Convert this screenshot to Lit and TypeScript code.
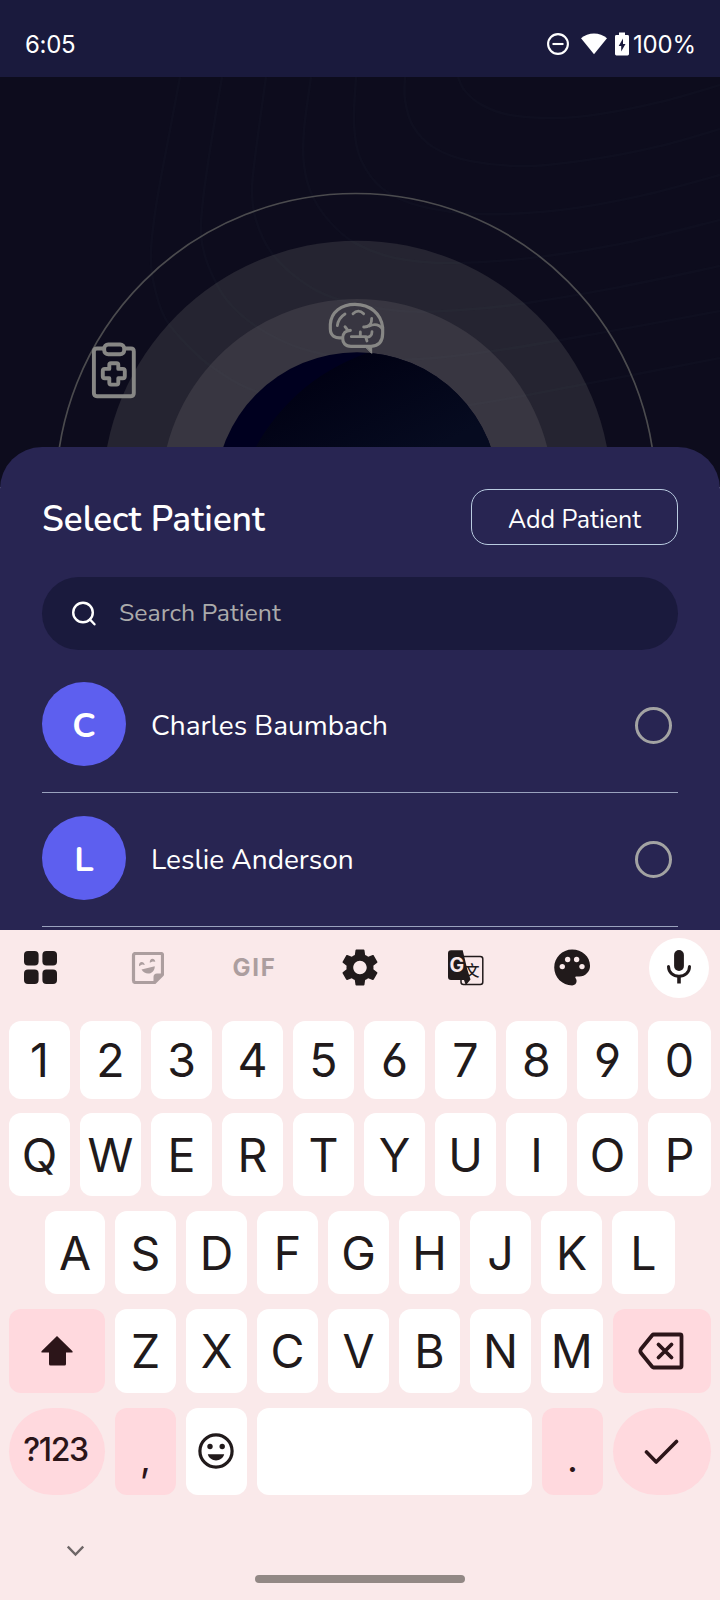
import { LitElement, html, svg, css } from "lit";
import { customElement, property } from "lit/decorators.js";

type Point = [number, number];

// Smooth open curve through a list of points.
function smooth(points: Point[]): string {
  let d = `M${points[0][0]} ${points[0][1]}`;
  for (let i = 0; i < points.length - 1; i++) {
    const a = points[Math.max(0, i - 1)];
    const b = points[i];
    const c = points[i + 1];
    const e = points[Math.min(points.length - 1, i + 2)];
    d += `C${b[0] + (c[0] - a[0]) / 6} ${b[1] + (c[1] - a[1]) / 6} ${c[0] - (e[0] - b[0]) / 6} ${c[1] - (e[1] - b[1]) / 6} ${c[0]} ${c[1]}`;
  }
  return d;
}

const contours: Point[][] = [
  [[180, 77], [170, 130], [157, 200], [151, 250], [153, 280], [165, 318], [190, 348], [215, 369], [255, 391], [330, 408], [400, 410], [470, 405], [580, 385], [720, 358]],
  [[222, 77], [210, 150], [203, 200], [201, 235], [208, 265], [226, 299], [257, 327], [300, 348], [350, 358], [420, 359], [500, 350], [600, 333], [720, 311]],
  [[266, 77], [256, 150], [252, 190], [256, 220], [271, 252], [300, 280], [337, 299], [400, 311], [460, 310], [520, 304], [620, 287], [720, 266]],
  [[311, 77], [304, 130], [304, 165], [312, 195], [330, 222], [355, 243], [395, 258], [450, 263], [530, 258], [620, 244], [720, 220]],
  [[356, 77], [354, 125], [361, 160], [383, 189], [420, 206], [480, 214], [560, 210], [640, 196], [720, 175]],
  [[405, 77], [405, 100], [413, 126], [433, 147], [470, 161], [530, 166], [600, 158], [660, 146], [720, 129]],
  [[458, 77], [465, 91], [482, 105], [510, 115], [555, 118], [600, 114], [660, 102], [720, 85]],
];

@customElement("status-bar")
class StatusBar extends LitElement {
  static styles = css`
    :host { display: flex; height: 77px; box-sizing: border-box; padding: 11px 22px 0 25px;
      background: #1a1a3d; color: #fff; align-items: center; font: 400 24px/30px Inter, sans-serif; }
    svg { display: block; }
    .time { flex: 1; letter-spacing: -0.3px; padding-top: 2px; }
    .dnd { margin-right: 12px; }
    .wifi { margin-right: 8px; }
    .battery { margin-right: 4px; }
    .level { width: 65px; letter-spacing: -0.2px; white-space: nowrap; padding-top: 2px; }
  `;
  render() {
    return html`
      <span class="time">6:05</span>
      <svg class="dnd" width="22" height="22" viewBox="0 0 22 22" fill="none" stroke="#fff" stroke-width="2.1">
        <circle cx="11" cy="11" r="9.9" /><path d="M5.5 11h11" />
      </svg>
      <svg class="wifi" width="26" height="22" viewBox="0 0 26 22" fill="#fff"><path d="M0 5.2C7-1.2 19-1.2 26 5.2L13 21.3Z" /></svg>
      <svg class="battery" width="14" height="24" viewBox="0 0 14 24">
        <path d="M4 .5h6v2.6h2.6q1.4 0 1.4 1.4v17.6q0 1.4-1.4 1.4H1.4Q0 23.5 0 22.1V4.5q0-1.4 1.4-1.4H4Z" fill="#fff" />
        <path d="M8 6.5 3.7 14H6.2v5.5L10.5 12H8Z" fill="#1a1a3d" />
      </svg>
      <span class="level">100%</span>
    `;
  }
}

@customElement("hero-scene")
class HeroScene extends LitElement {
  static styles = css`
    :host { display: block; height: 410px; margin-bottom: -40px; background: #0d0c1d; }
    svg { display: block; }
  `;
  render() {
    return html`
      <svg width="720" height="410" viewBox="0 77 720 410" fill="none">
        <defs>
          <linearGradient id="core" gradientUnits="userSpaceOnUse" x1="330" y1="350" x2="390" y2="470">
            <stop offset="0" stop-color="#000012" /><stop offset="1" stop-color="#060b20" />
          </linearGradient>
          <clipPath id="disc"><circle cx="357" cy="494.3" r="142" /></clipPath>
        </defs>
        <circle cx="355.8" cy="493.4" r="299.9" stroke="#4b4b4e" stroke-width="1.7" />
        <circle cx="357" cy="495.3" r="254.6" fill="#252431" />
        <circle cx="357" cy="495.3" r="196.3" fill="#383641" />
        ${contours.map((c) => svg`<path d=${smooth(c)} stroke="#6a8090" stroke-opacity=".027" stroke-width="2.6" />`)}
        <circle cx="357" cy="494.3" r="142" fill="#00001f" />
        <circle cx="433" cy="544" r="202" fill="url(#core)" clip-path="url(#disc)" />
        <g stroke="#878785" stroke-width="3.9" stroke-linecap="round" stroke-linejoin="round">
          <path d="M103 348.5H97Q93.9 348.5 93.9 351.5V393Q93.9 396.2 97 396.2H131Q133.8 396.2 133.8 393V351.5Q133.8 348.5 131 348.5H125" />
          <rect x="104.2" y="344.5" width="20" height="9.8" rx="4" />
          <path d="M111 363.2h5.6q1.7 0 1.7 1.7v4h4.5q2 0 2 2v5.4q0 2-2 2h-4.5v4.3q0 2-1.7 2H111q-1.7 0-1.7-2v-4.3h-4.5q-2 0-2-2v-5.4q0-2 2-2h4.5v-4q0-1.7 1.7-1.7Z" />
        </g>
        <g transform="translate(320 290) scale(.33333)" stroke="#878785" stroke-width="9.5" stroke-linecap="round" stroke-linejoin="round">
          <path d="M66 143C47 146 31 138 31 117V103C33 66 64 43 105 43C151 43 183 71 188 112V130C188 154 176 168 153 169H93C75 169 68 158 68 145C68 130 78 121 91 121" />
          <path d="M52 107C54 92 62 80 75 72M99 71C109 61 121 61 131 71M131 111C147 112 156 101 155 85M148 108C165 100 179 105 188 118M75 110L84 122M94 140H138M121 138V126M156 125C156 138 148 143 137 141L141 153" stroke-width="8.5" />
          <path d="M137 171H155V189Z" fill="#878785" stroke-width="3" />
        </g>
      </svg>
    `;
  }
}

@customElement("patient-row")
class PatientRow extends LitElement {
  @property() name = "";
  static styles = css`
    :host { display: flex; height: 134px; box-sizing: border-box; padding: 0 6px 26px 0; align-items: flex-end;
      border-bottom: 1px solid #9aa2be; color: #fff; font-family: "Nunito", "Open Sans", sans-serif; }
    .avatar { width: 84px; height: 84px; border-radius: 50%; background: #5d5fef; display: grid; place-items: center;
      font-weight: 700; font-size: 34.5px; line-height: 84px; }
    .letter { padding-top: 3px; line-height: 81px; }
    .name { flex: 1; margin-left: 25px; font-size: 28px; line-height: 80px; white-space: nowrap; }
    .radio { width: 37px; height: 37px; box-sizing: border-box; border: 3px solid #a3a3a3; border-radius: 50%; margin-bottom: 22.5px; }
  `;
  render() {
    return html`
      <div class="avatar"><span class="letter">${this.name[0]}</span></div>
      <div class="name">${this.name}</div>
      <div class="radio"></div>
    `;
  }
}

@customElement("patient-sheet")
class PatientSheet extends LitElement {
  static styles = css`
    :host { display: block; position: relative; height: 483px; box-sizing: border-box; overflow: hidden; padding: 42px 42px 0;
      border-radius: 42px 42px 0 0; background: #282552; color: #fff; font-family: "Nunito", "Open Sans", sans-serif; }
    .head { display: flex; justify-content: space-between; align-items: center; height: 56px; }
    .title { font-size: 35px; font-weight: 600; line-height: 60px; padding-top: 6px; white-space: nowrap; letter-spacing: 0.05px; }
    .add { width: 207px; height: 56px; box-sizing: border-box; border: 1.5px solid #b9cbe0; border-radius: 17px;
      font-size: 25px; line-height: 60px; text-align: center; white-space: nowrap; }
    .search { display: flex; align-items: center; height: 73px; margin-top: 32px; padding-left: 29px; border-radius: 37px; background: #1a1a3d; box-sizing: border-box; }
    .search svg { display: block; margin-right: 21px; }
    .hint { font-size: 24.9px; line-height: 70px; padding-bottom: 2px; color: #ababab; white-space: nowrap; }
    .list { margin-top: 9px; }
  `;
  render() {
    return html`
      <div class="head">
        <div class="title">Select Patient</div>
        <div class="add">Add Patient</div>
      </div>
      <div class="search">
        <svg width="27" height="27" viewBox="0 0 27 27" fill="none" stroke="#fff" stroke-width="2.4" stroke-linecap="round">
          <circle cx="12" cy="12.5" r="9.8" /><path d="m19 19.5 4.5 4.8" />
        </svg>
        <span class="hint">Search Patient</span>
      </div>
      <div class="list">
        <patient-row name="Charles Baumbach"></patient-row>
        <patient-row name="Leslie Anderson"></patient-row>
      </div>
    `;
  }
}

const gear = "M19.14 12.94c.04-.3.06-.61.06-.94 0-.32-.02-.64-.07-.94l2.03-1.58c.18-.14.23-.41.12-.61l-1.92-3.32c-.12-.22-.37-.29-.59-.22l-2.39.96c-.5-.38-1.03-.7-1.62-.94l-.36-2.54c-.04-.24-.24-.41-.48-.41h-3.84c-.24 0-.43.17-.47.41l-.36 2.54c-.59.24-1.13.57-1.62.94l-2.39-.96c-.22-.08-.47 0-.59.22L2.74 8.87c-.12.21-.08.47.12.61l2.03 1.58c-.05.3-.09.63-.09.94s.02.64.07.94l-2.03 1.58c-.18.14-.23.41-.12.61l1.92 3.32c.12.22.37.29.59.22l2.39-.96c.5.38 1.03.7 1.62.94l.36 2.54c.05.24.24.41.48.41h3.84c.24 0 .44-.17.47-.41l.36-2.54c.59-.24 1.13-.56 1.62-.94l2.39.96c.22.08.47 0 .59-.22l1.92-3.32c.12-.22.07-.47-.12-.61l-2.01-1.58zM12 15.6c-1.98 0-3.6-1.62-3.6-3.6s1.62-3.6 3.6-3.6 3.6 1.62 3.6 3.6-1.62 3.6-3.6 3.6z";

@customElement("soft-keyboard")
class SoftKeyboard extends LitElement {
  static styles = css`
    :host { display: block; height: 670px; background: #fae9ea; color: #211a1b; overflow: hidden; font-family: Inter, sans-serif; }
    svg { display: block; }
    .tools { display: grid; grid-template-columns: repeat(7, 106.4px); height: 76px; margin: 0 0 15px -12.4px; place-items: center; }
    .tools > svg { margin-bottom: 1px; }
    .gif { font-weight: 700; font-size: 24px; line-height: 30px; letter-spacing: 1.8px; color: #ac9e9f; padding: 0 0 1px 2px; }
    .mic { width: 60px; height: 60px; border-radius: 50%; background: #fff; display: grid; place-items: center; }
    .mic svg { margin-bottom: 2px; }
    .row { display: flex; gap: 10px; height: 83px; margin: 0 9px 15px; }
    .row.digits { height: 78px; margin-bottom: 14px; }
    .row.home { margin: 0 45px 15px; }
    .row.lower { height: 84px; }
    .row.last { height: 87px; margin-bottom: 0; }
    .key { flex: 0 0 61px; min-width: 0; display: flex; align-items: center; justify-content: center; border-radius: 12px; background: #fff;
      font-size: 46.5px; line-height: 60px; font-weight: 400; font-feature-settings: "cv03", "cv04"; }
    .row > .key:last-child { flex-grow: 1; }
    .home > .key:first-child { flex-basis: 60px; }
    .row > .pink { background: #ffd9de; color: #2c1519; }
    .lower > .shift, .last > .symbols { flex: 0 0 96px; }
    .row > .del, .row > .enter { flex: 0 0 98px; }
    .lower > .key:nth-child(8) { flex-grow: 1; }
    .symbols, .enter { border-radius: 44px; }
    .symbols { font-size: 32px; font-weight: 500; letter-spacing: -1.4px; padding: 0 3px 3px 0; box-sizing: border-box; }
    .last > .space { flex: 0 0 275px; }
    .mark { font-size: 38px; align-items: flex-end; padding-bottom: 7px; box-sizing: border-box; }
    .del svg { margin-right: 2px; }
    .smile svg { margin: 0 1px 1px 0; }
    .foot { display: flex; padding: 50px 0 0 67px; }
    .pill { width: 210px; height: 8px; border-radius: 4px; background: #928885; margin: 18px 0 0 255px; }
  `;
  keys(text: string) {
    return [...text].map((k) => html`<div class="key">${k}</div>`);
  }
  render() {
    return html`
      <div class="tools">
        <svg width="33" height="33" viewBox="0 0 33 33" fill="currentColor">
          <rect width="14.6" height="14.6" rx="4" /><rect x="18.4" width="14.6" height="14.6" rx="4" />
          <rect y="18.4" width="14.6" height="14.6" rx="4" /><rect x="18.4" y="18.4" width="14.6" height="14.6" rx="4" />
        </svg>
        <svg width="34" height="32" viewBox="-2 0 34 32" fill="none" stroke="#ac9e9f">
          <path d="M3.5 1.5h25.5q1.5 0 1.5 1.5v19.5l-8 8H3.500q-2 0-2-2v-25q0-2 2-2Z" stroke-width="3.2" stroke-linejoin="round" />
          <path d="M21.5 31v-6q0-3.5 3.5-3.5h6Z" fill="#ac9e9f" stroke="none" />
          <path d="M9.5 17.500 22.800 14.200C22.500 22.800 13 23.800 9.500 17.500Z" fill="#ac9e9f" stroke="none" />
          <path d="M7 14.200c-.7-5 5-5.700 5.800-1.200l-2.700-.5ZM17.800 10.800c-.5-5 5-5.300 5.500-1l-2.700-.4Z" fill="#ac9e9f" stroke="none" />
        </svg>
        <span class="gif">GIF</span>
        <svg width="45" height="45" viewBox="-.25 0 24 24" fill="currentColor"><path d=${gear} /></svg>
        <svg width="36" height="36" viewBox="0 0 36 36">
          <rect x="13" y="6.500" width="21.800" height="28" rx="2.500" fill="none" stroke="currentColor" stroke-width="1.500" />
          <text x="16.600" y="25.500" font-family="Noto Sans CJK SC, sans-serif" font-weight="500" font-size="15" fill="currentColor">文</text>
          <path d="M3 .3H14.700L19.200 19 22.500 29.500 17.800 35.300 16 30H3Q0 30 0 27V3.300Q0 .3 3 .3Z" fill="currentColor" />
          <text x="1.500" y="22" font-family="Inter, sans-serif" font-weight="700" font-size="19.500" fill="#fae9ea">G</text>
        </svg>
        <svg width="43" height="43" viewBox="0.200 0 24 24" fill="currentColor">
          <path d="M12 22C6.490 22 2 17.510 2 12S6.490 2 12 2s10 4.040 10 9c0 3.310-2.690 6-6 6h-1.770c-.280 0-.500.220-.500.500 0 .120.050.230.130.330.410.470.640 1.060.640 1.670 0 1.380-1.120 2.500-2.500 2.500z" />
          <g fill="#fae9ea"><circle cx="6.500" cy="11.500" r="1.500" /><circle cx="9.500" cy="7.500" r="1.500" /><circle cx="14.500" cy="7.500" r="1.500" /><circle cx="17.500" cy="11.500" r="1.500" /></g>
        </svg>
        <div class="mic">
          <svg width="26" height="34" viewBox="0 0 26 34" fill="none" stroke="currentColor" stroke-width="3">
            <rect x="8.1" y="0" width="9.8" height="21" rx="4.9" fill="currentColor" stroke="none" />
            <path d="M2.500 16.500c0 6 4.700 9.800 10.500 9.800s10.500-3.800 10.500-9.800" stroke-linecap="round" /><path d="M13 26v7.500" stroke-width="3.600" />
          </svg>
        </div>
      </div>
      <div class="row digits">${this.keys("1234567890")}</div>
      <div class="row">${this.keys("QWERTYUIOP")}</div>
      <div class="row home">${this.keys("ASDFGHJKL")}</div>
      <div class="row lower">
        <div class="key pink shift">
          <svg width="32" height="30" viewBox="0 0 32 30" fill="currentColor"><path d="M16 0 31.300 15q1 1.500-.800 1.500H25V28q0 1.500-1.500 1.500h-14Q8 29.500 8 28V16.500H1.500Q-.300 16.500.700 15Z" /></svg>
        </div>
        ${this.keys("ZXCVBNM")}
        <div class="key pink del">
          <svg width="46" height="38" viewBox="0 0 46 38" fill="none" stroke="currentColor" stroke-width="3.800" stroke-linejoin="round" stroke-linecap="round">
            <path d="M15.500 2.500H42Q43.500 2.500 43.500 4V34Q43.500 35.500 42 35.500H15.500Q14.800 35.500 14.200 34.800L3 21Q1.700 19 3 17L14.200 3.200Q14.800 2.500 15.500 2.500Z" />
            <path d="m20.500 12.500 13 13m0-13-13 13" />
          </svg>
        </div>
      </div>
      <div class="row last">
        <div class="key pink symbols">?123</div>
        <div class="key pink mark">,</div>
        <div class="key smile">
          <svg width="36" height="36" viewBox="0 0 36 36" fill="currentColor">
            <circle cx="18" cy="18" r="16.100" fill="none" stroke="currentColor" stroke-width="3.200" />
            <circle cx="12" cy="13.500" r="2.700" /><circle cx="24.200" cy="13.500" r="2.700" /><path d="M9.800 21.300H26.200C24 29.500 12 29.500 9.800 21.300Z" />
          </svg>
        </div>
        <div class="key space"></div>
        <div class="key pink mark">.</div>
        <div class="key pink enter">
          <svg width="36" height="26" viewBox="0 0 36 26" fill="none" stroke="currentColor" stroke-width="3.600" stroke-linecap="round" stroke-linejoin="round"><path d="M2.500 13 12.200 23 32.500 2.500" /></svg>
        </div>
      </div>
      <div class="foot">
        <svg width="17" height="12" viewBox="0 0 17 12" fill="none" stroke="#6e6667" stroke-width="2.400"><path d="M.800 1.500 8.500 9.500 16.200 1.500" /></svg>
      </div>
      <div class="pill"></div>
    `;
  }
}

@customElement("app-root")
class AppRoot extends LitElement {
  static styles = css`
    :host { display: flex; flex-direction: column; width: 720px; height: 1600px; overflow: hidden; }
    status-bar, hero-scene, patient-sheet, soft-keyboard { flex: none; }
  `;
  render() {
    return html`
      <status-bar></status-bar>
      <hero-scene></hero-scene>
      <patient-sheet></patient-sheet>
      <soft-keyboard></soft-keyboard>
    `;
  }
}
